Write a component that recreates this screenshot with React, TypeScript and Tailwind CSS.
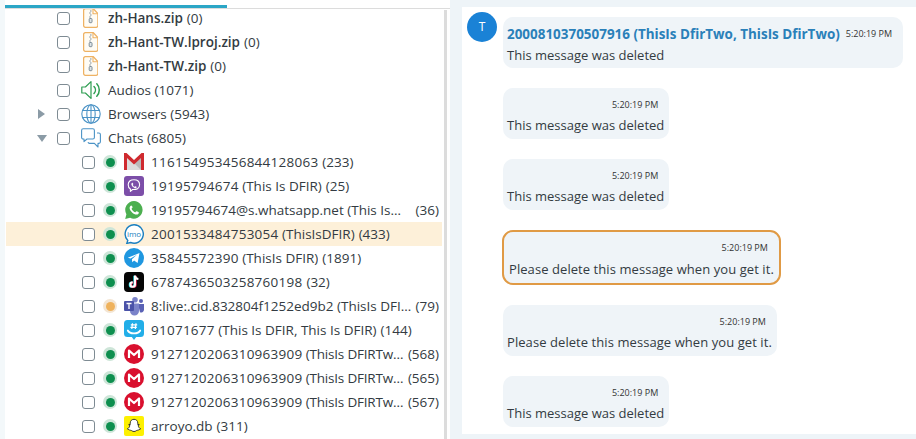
import { FC, ReactNode } from 'react';

const FileZip: FC = () => (
  <svg viewBox="0 0 15 20" className="h-5 w-[15px]">
    <path d="M1.700.7h8l4.600 4.800v12.100a1.700 1.700 0 0 1-1.700 1.700H1.700A1.700 1.700 0 0 1 0 17.600V2.400A1.700 1.700 0 0 1 1.700.7Z" transform="translate(.6 0)" fill="#fffcf5" stroke="#eeb264" strokeWidth="1.300" />
    <path d="M10 1v4.800h4.600" fill="none" stroke="#eeb264" strokeWidth="1.100" />
    <path d="M7 3h1.600M6.200 5h1.600M7 7h1.600M6.200 9h1.600" stroke="#7f909b" strokeWidth="1.200" />
    <rect x="6.200" y="10.500" width="2.800" height="4.200" rx=".8" fill="#dfe5e8" stroke="#7d8d98" strokeWidth="1" />
  </svg>
);

const AudioIcon: FC = () => (
  <svg viewBox="0 0 20 20" fill="none" stroke="#2f9e52" strokeWidth="1.200" className="h-5 w-5">
    <path d="M.8 7h3.600L10 1.600v16.800L4.400 13H.8Z" strokeLinejoin="round" />
    <path d="M13 6.500a5 5 0 0 1 0 7M15.800 3.800a9 9 0 0 1 0 12.400" strokeLinecap="round" strokeWidth="1.500" />
  </svg>
);

const GlobeIcon: FC = () => (
  <svg viewBox="0 0 20 20" fill="none" stroke="#4b93c6" strokeWidth="1.100" className="h-5 w-5">
    <circle cx="10" cy="10" r="9.200" />
    <ellipse cx="10" cy="10" rx="4.200" ry="9.200" />
    <path d="M10 .8v18.400M1.600 6.500h16.800M1.600 13.500h16.800" />
  </svg>
);

const ChatIcon: FC = () => (
  <svg viewBox="0 0 20 20" fill="none" stroke="#4b93c6" strokeWidth="1.100" className="h-5 w-5" strokeLinejoin="round">
    <path d="M2.200.8h9.600a1.600 1.600 0 0 1 1.600 1.600v7a1.600 1.600 0 0 1-1.600 1.600H6l-3 2.600V11h-.8A1.600 1.600 0 0 1 .6 9.400v-7A1.600 1.600 0 0 1 2.200.8Z" />
    <path d="M16 5h1.800a1.600 1.600 0 0 1 1.600 1.600v7.200a1.600 1.600 0 0 1-1.600 1.600H17V19l-3.600-3.600H8.600A1.600 1.600 0 0 1 7 14.200" />
  </svg>
);

const GmailIcon: FC = () => (
  <svg viewBox="0 0 20 20" className="h-5 w-5">
    <path d="M0 1h20v17H0Z" fill="#fff" />
    <path d="M3 4.500 10 11l7-6.500V18H3Z" fill="#dcdcdc" />
    <path d="M10 11l7-6.500V18Z" fill="#b9b9b9" />
    <path d="M0 1h2.500L10 8l7.500-7H20v17h-3V6l-7 6.500L3 6v12H0Z" fill="#cf2a2f" />
  </svg>
);

const ViberIcon: FC = () => (
  <svg viewBox="0 0 20 20" className="h-5 w-5">
    <rect width="20" height="20" rx="3" fill="#7c4ea8" />
    <path d="M10 3.800c-3.600 0-5.800 1.500-5.800 5 0 2.200.7 3.600 2.200 4.300v2.300l2.200-1.900c3.900.2 7-.9 7-4.700 0-3.500-2-5-5.600-5Z" fill="none" stroke="#fff" strokeWidth="1.100" strokeLinejoin="round" />
    <path d="M8 6.800c.6-.3 1 .6 1.300 1.200.2.500-.6.700-.4 1.200.3.700.9 1.200 1.500 1.500.5.200.7-.6 1.200-.4.600.3 1.400.8 1 1.300-.7 1-1.800.6-2.900 0-1-.6-1.800-1.500-2.200-2.600-.3-.9 0-1.800.5-2.200Z" fill="#fff" />
  </svg>
);

const WhatsappIcon: FC = () => (
  <svg viewBox="0 0 20 20" className="h-5 w-5">
    <path d="M10 1a8.800 8.800 0 0 0-7.600 13.200L1.200 19l4.900-1.200A8.800 8.800 0 1 0 10 1Z" fill="#4caf50" />
    <path d="M7.200 5.500c-.5 0-1.600 1-1.600 2.600 0 1.400 1 3 2.500 4.400 1.600 1.500 3.200 2.200 4.500 2.100 1.300-.1 2.300-1.100 2.300-1.900 0-.6-2-1.700-2.500-1.500-.5.200-.8 1.100-1.300 1-.7-.1-1.500-.7-2.200-1.400-.7-.7-1.200-1.400-1.300-2 0-.5.800-.9 1-1.300.2-.5-.8-2-1.400-2Z" fill="#fff" />
  </svg>
);

const ImoIcon: FC = () => (
  <svg viewBox="0 0 20 20" className="h-5 w-5">
    <path d="M10 .8a9.200 9.200 0 1 1-3.400 17.700l-3.800.9 1-3A9.200 9.200 0 0 1 10 .8Z" fill="#fff" stroke="#1b7fc0" strokeWidth="1.400" />
    <text x="10" y="12.700" textAnchor="middle" fontSize="8" fontFamily="Open Sans, sans-serif" fill="#1b7fc0">imo</text>
  </svg>
);

const TelegramIcon: FC = () => (
  <svg viewBox="0 0 20 20" className="h-5 w-5">
    <circle cx="10" cy="10" r="10" fill="#1f97e0" />
    <path d="M3.800 9.800 15.500 5l-1.900 10-3.500-2.500-1.800 1.800-.4-3.100 5-4.500-6.300 3.800Z" fill="#fff" />
  </svg>
);

const TiktokIcon: FC = () => (
  <svg viewBox="0 0 20 20" className="h-5 w-5">
    <rect width="20" height="20" rx="4" fill="#050505" />
    <path d="M11 3.500v9a2.300 2.300 0 1 1-2.300-2.300" fill="none" stroke="#28e0e6" strokeWidth="2" transform="translate(-.7 .2)" />
    <path d="M11 3.500v9a2.300 2.300 0 1 1-2.300-2.300" fill="none" stroke="#f3285a" strokeWidth="2" transform="translate(.7 .2)" />
    <path d="M11 3.500v9a2.300 2.300 0 1 1-2.300-2.300M11 3.800c.2 1.800 1.500 3 3.400 3.200" fill="none" stroke="#fff" strokeWidth="2" />
  </svg>
);

const TeamsIcon: FC = () => (
  <svg viewBox="0 0 20 20" className="h-5 w-5">
    <circle cx="11" cy="3.800" r="2.800" fill="#7b83c9" />
    <circle cx="17" cy="5" r="2" fill="#5a62b5" />
    <path d="M14 8h6v5.500a3 3 0 0 1-4 2.800Z" fill="#5a62b5" />
    <path d="M6 7.500h9v7.500a4.500 4.500 0 0 1-9 0Z" fill="#7b83c9" />
    <rect y="5" width="10" height="10" rx="1" fill="#4a52a8" />
    <path d="M2.500 7.500h5M5 7.500v5.500" stroke="#fff" strokeWidth="1.300" />
  </svg>
);

const GroupmeIcon: FC = () => (
  <svg viewBox="0 0 20 20" className="h-5 w-5">
    <path d="M3.500 0h13A3.500 3.500 0 0 1 20 3.500v10a3.500 3.500 0 0 1-3.500 3.500h-4.300L10 20l-2.200-3H3.500A3.500 3.500 0 0 1 0 13.500v-10A3.500 3.500 0 0 1 3.500 0Z" fill="#22aee8" />
    <path d="M8.500 3.200 7.800 9M12 3.200 11.300 9M6.800 4.900h6.400M6.400 7.300h6.400" stroke="#fff" strokeWidth="1.200" />
    <path d="M3.800 10.500a6.500 4.200 0 0 0 12.400 0" fill="none" stroke="#fff" strokeWidth="1.800" strokeLinecap="round" />
  </svg>
);

const MegaIcon: FC = () => (
  <svg viewBox="0 0 20 20" className="h-5 w-5">
    <circle cx="10" cy="10" r="10" fill="#d9102e" />
    <path d="M5 14V6.500L10 11l5-4.500V14" fill="none" stroke="#fff" strokeWidth="2.200" strokeLinejoin="round" />
  </svg>
);

const SnapchatIcon: FC = () => (
  <svg viewBox="0 0 20 20" className="h-5 w-5">
    <rect width="20" height="20" rx="2" fill="#fdf000" />
    <path d="M10 3.300c2.400 0 3.800 1.700 3.800 3.800v1.600l1.300-.3c.5.300.2.800-.9 1.300.3 1.400 1.200 2.600 2.400 3.100-.3.600-1.200.6-1.800.9-.3.800-.8.500-1.600.6-.9.100-1.400 1.200-3.200 1.200s-2.300-1.100-3.200-1.200c-.8-.1-1.300.2-1.600-.6-.6-.3-1.500-.3-1.800-.9 1.200-.5 2.100-1.700 2.400-3.100-1.100-.5-1.400-1-.9-1.300l1.300.3V7.100c0-2.100 1.400-3.800 3.800-3.800Z" fill="#fff" stroke="#222" strokeWidth=".9" strokeLinejoin="round" />
  </svg>
);

const Checkbox: FC = () => (
  <span className="h-[13px] w-[13px] shrink-0 rounded-[3px] border border-[#7e8b93] bg-white" />
);

const StatusDot: FC<{ warn?: boolean }> = ({ warn }) => (
  <span className={`flex h-[14px] w-[14px] shrink-0 items-center justify-center rounded-full ${warn ? 'bg-[#f3e5d3]' : 'bg-[#cde5d8]'}`}>
    <span className={`h-[9px] w-[9px] rounded-full ${warn ? 'bg-[#efb25c]' : 'bg-[#0e8f4f]'}`} />
  </span>
);

const FileRow: FC<{ name: string; first?: boolean }> = ({ name, first }) => (
  <li className={`flex h-6 shrink-0 items-center pl-[52px] ${first ? '-mt-[3px]' : ''}`}>
    <Checkbox />
    <span className="ml-[13px] flex w-[25px] shrink-0">
      <FileZip />
    </span>
    <span className="font-semibold">{name}</span>
    <span className="ml-1">(0)</span>
  </li>
);

const GroupRow: FC<{ label: string; icon: ReactNode; caret?: 'right' | 'down' }> = ({ label, icon, caret }) => (
  <li className="flex h-6 shrink-0 items-center pl-[32px]">
    <span className="flex w-[20px] shrink-0 items-center">
      {caret === 'right' && (
        <span className="ml-[1px] h-0 w-0 border-y-[5px] border-l-[7px] border-y-transparent border-l-[#8b9ba6]" />
      )}
      {caret === 'down' && (
        <span className="h-0 w-0 border-x-[5px] border-t-[7px] border-x-transparent border-t-[#8b9ba6]" />
      )}
    </span>
    <Checkbox />
    <span className="ml-[11px] flex w-[27px] shrink-0">{icon}</span>
    <span>{label}</span>
  </li>
);

const chats: { icon: ReactNode; id: string; name: string; count: string; wide?: boolean; warn?: boolean; active?: boolean; nameClass?: string }[] = [
  { icon: <GmailIcon />, id: '116154953456844128063', name: '', count: '(233)', wide: true },
  { icon: <ViberIcon />, id: '19195794674', name: ' (This Is DFIR)', count: '(25)', wide: true },
  { icon: <WhatsappIcon />, id: '19195794674@s.whatsapp.net', name: ' (This Is DFIR)', count: '(36)', nameClass: 'mr-[9px]' },
  { icon: <ImoIcon />, id: '2001533484753054', name: ' (ThisIsDFIR)', count: '(433)', wide: true, active: true },
  { icon: <TelegramIcon />, id: '35845572390', name: ' (ThisIs DFIR)', count: '(1891)', wide: true },
  { icon: <TiktokIcon />, id: '6787436503258760198', name: '', count: '(32)', wide: true },
  { icon: <TeamsIcon />, id: '8:live:.cid.832804f1252ed9b2', name: ' (ThisIs DFIR, ThisIs)', count: '(79)', warn: true },
  { icon: <GroupmeIcon />, id: '91071677', name: ' (This Is DFIR, This Is DFIR)', count: '(144)', wide: true },
  { icon: <MegaIcon />, id: '9127120206310963909', name: ' (ThisIs DFIRTwo, ThisIs)', count: '(568)', wide: true, nameClass: 'tracking-[-0.2px]' },
  { icon: <MegaIcon />, id: '9127120206310963909', name: ' (ThisIs DFIRTwo, ThisIs)', count: '(565)', wide: true, nameClass: 'tracking-[-0.2px]' },
  { icon: <MegaIcon />, id: '9127120206310963909', name: ' (ThisIs DFIRTwo, ThisIs)', count: '(567)', wide: true, nameClass: 'tracking-[-0.2px]' },
  { icon: <SnapchatIcon />, id: 'arroyo.db', name: '', count: '(311)' },
];

const Bubble: FC<{ text: string; selected?: boolean }> = ({ text, selected }) => (
  <div
    className={
      selected
        ? 'flex h-[55px] w-fit flex-col rounded-[11px] border-2 border-[#e09a45] bg-[#eff4f8] -ml-px pl-[5px] pr-[5px] pt-[10px]'
        : 'flex h-[51px] w-fit flex-col rounded-[10px] bg-[#eff4f8] pl-1 pr-[5px] pt-[11px]'
    }
  >
    <span className="h-3 self-end pr-[6px] text-[9px] leading-3 text-[#333]">5:20:19 PM</span>
    <span className={`leading-5 ${selected ? 'mt-[5px]' : 'mt-1'} ${text.startsWith('Please') ? 'tracking-[0.07px]' : ''}`}>{text}</span>
  </div>
);

export default function App() {
  return (
    <div className="flex h-[439px] w-[916px] overflow-hidden bg-[#eef4f8] text-[13.5px] text-[#333b42] [font-family:'Open_Sans',sans-serif]">
      <aside className="flex w-[450px] shrink-0 flex-col bg-white pl-[5px] shadow-[inset_5px_0_0_#f3f8fa]">
        <div className="h-[9px] shrink-0 border-b border-[#dcdcdc] pt-[5px]">
          <div className="h-[3px] w-[222px] bg-[#2ba6c6]" />
        </div>
        <div className="flex min-h-0 flex-1">
          <ul className="flex min-w-0 flex-1 flex-col overflow-hidden">
            <FileRow name="zh-Hans.zip" first />
            <FileRow name="zh-Hant-TW.lproj.zip" />
            <FileRow name="zh-Hant-TW.zip" />
            <GroupRow label="Audios (1071)" icon={<AudioIcon />} />
            <GroupRow label="Browsers (5943)" icon={<GlobeIcon />} caret="right" />
            <GroupRow label="Chats (6805)" icon={<ChatIcon />} caret="down" />
            {chats.map((chat, i) => (
              <li
                key={i}
                className={`ml-px flex h-6 shrink-0 items-center pl-[76px] pr-[3px] ${chat.active ? 'bg-[#fdf0d9]' : ''}`}
              >
                <Checkbox />
                <span className="ml-[8px]">
                  <StatusDot warn={chat.warn} />
                </span>
                <span className="ml-[7px] flex w-[27px] shrink-0">{chat.icon}</span>
                <span className={`min-w-0 truncate ${chat.nameClass ?? ''}`}>
                  <span className={chat.wide ? 'tracking-[0.25px]' : ''}>{chat.id}</span>
                  {chat.name}
                </span>
                <span className="ml-1 shrink-0">{chat.count}</span>
              </li>
            ))}
          </ul>
          <div className="ml-[2px] mr-[3px] mt-[1px] w-[3px] shrink-0 bg-[#dcdcdc]" />
        </div>
      </aside>
      <main className="ml-3 mt-[7px] mb-[5px] flex flex-1 gap-[6px] bg-white pl-[5px] pt-[5px] text-[13px]">
        <div className="flex h-[30px] w-[30px] shrink-0 items-center justify-center rounded-full bg-[#1a82d6] text-[12px] text-white">
          T
        </div>
        <div className="flex flex-col gap-5 pt-[5px]">
          <div className="flex h-[51px] w-fit flex-col rounded-[10px] bg-[#eff4f8] pl-1 pr-[11px] pt-[7px]">
            <div className="flex items-center gap-[6px]">
              <span className="text-[13.45px] font-bold leading-5 text-[#2a80b9]">2000810370507916 (ThisIs DfirTwo, ThisIs DfirTwo)</span>
              <span className="text-[9px] leading-3 text-[#333]">5:20:19 PM</span>
            </div>
            <span className="mt-[1px] leading-5">This message was deleted</span>
          </div>
          <Bubble text="This message was deleted" />
          <Bubble text="This message was deleted" />
          <Bubble text="Please delete this message when you get it." selected />
          <Bubble text="Please delete this message when you get it." />
          <Bubble text="This message was deleted" />
        </div>
      </main>
    </div>
  );
}
